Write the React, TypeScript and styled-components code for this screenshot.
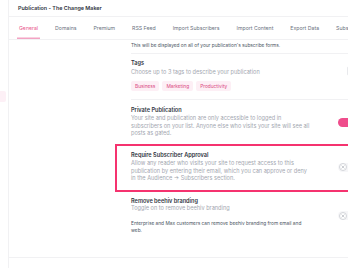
import { createGlobalStyle, styled } from 'styled-components';

const GlobalStyle = createGlobalStyle`
  html, body {
    margin: 0;
    padding: 0;
    background: #ffffff;
  }
  body {
    font-family: Inter, "Noto Sans", sans-serif;
    -webkit-font-smoothing: antialiased;
  }
`;

const Page = styled.div`
  display: flex;
  width: 348px;
  height: 268px;
  overflow: hidden;
  background: #ffffff;
`;

const Sidebar = styled.aside`
  flex: 0 0 9px;
  border-right: 1px solid #f1f1f3;
  padding-top: 91px;
  box-sizing: border-box;
`;

const SidebarItem = styled.div`
  width: 6px;
  height: 11px;
  background: #fdf0f6;
  border-radius: 0 2px 2px 0;
`;

const Main = styled.main`
  flex: 1;
  display: flex;
  flex-direction: column;
  min-width: 0;
  overflow: hidden;
`;

const Header = styled.header`
  height: 17px;
  flex: 0 0 17px;
  box-sizing: border-box;
  display: flex;
  align-items: center;
  padding-left: 9px;
  border-bottom: 1px solid #f1f1f3;
`;

const Title = styled.h1`
  margin: 0;
  font-size: 5.4px;
  font-weight: 600;
  color: #2f3441;
  white-space: nowrap;
`;

const Tabs = styled.nav`
  flex: 0 0 23px;
  height: 23px;
  box-sizing: border-box;
  display: flex;
  align-items: stretch;
  gap: 13px;
  padding-left: 8px;
  border-bottom: 1px solid #f1f1f3;
  white-space: nowrap;
`;

const Tab = styled.div<{ $active?: boolean }>`
  display: flex;
  align-items: center;
  padding: 0 2px;
  font-size: 5.2px;
  color: ${({ $active }) => ($active ? '#e9578c' : '#6b7280')};
  box-shadow: ${({ $active }) => ($active ? 'inset 0 -1.5px 0 #f3a3c3' : 'none')};
`;

const Content = styled.section`
  flex: 1;
  padding-left: 122px;
  width: 230px;
  box-sizing: content-box;
`;

const Helper = styled.p`
  margin: 0;
  height: 14px;
  box-sizing: border-box;
  padding-top: 2px;
  font-size: 4.8px;
  line-height: 6px;
  color: #4b5563;
  white-space: nowrap;
  border-bottom: 1px solid #f1f1f3;
`;

const Row = styled.div<{ $top: number; $bottom: number; $divider?: boolean }>`
  display: flex;
  align-items: center;
  justify-content: space-between;
  padding: ${({ $top, $bottom }) => `${$top}px 5px ${$bottom}px 0`};
  border-bottom: ${({ $divider }) => ($divider ? '1px solid #f1f1f3' : 'none')};
`;

const Highlight = styled.div`
  margin-left: -16px;
  border: 2px solid #f5336f;
  border-right: none;
  padding-left: 14px;
`;

const Text = styled.div`
  width: 182px;
`;

const Label = styled.div`
  font-size: 5.6px;
  line-height: 6px;
  font-weight: 600;
  color: #2f3441;
`;

const Desc = styled.div<{ $gap?: number }>`
  margin-top: ${({ $gap }) => $gap ?? 2.5}px;
  font-size: 5.6px;
  line-height: 7.6px;
  color: #a3a7b0;
`;

const Note = styled.div`
  margin-top: 7px;
  font-size: 4.8px;
  line-height: 7px;
  color: #4b5563;
`;

const TagList = styled.div`
  display: flex;
  gap: 3px;
  margin-top: 4.5px;
`;

const TagPill = styled.span`
  display: inline-flex;
  align-items: center;
  height: 10px;
  padding: 0 4px;
  border-radius: 2px;
  background: #fdeff5;
  color: #d9467f;
  font-size: 4.8px;
`;

const TagInput = styled.div`
  align-self: flex-start;
  margin: 6px -2px 0 0;
  flex: 0 0 11px;
  height: 10px;
  box-sizing: border-box;
  border: 1px solid #e8e9ec;
  border-radius: 2px;
`;

const Toggle = styled.div<{ $on?: boolean }>`
  position: relative;
  flex: 0 0 18px;
  height: 9px;
  border-radius: 5px;
  background: ${({ $on }) => ($on ? '#ef4d8c' : '#f6f6f8')};
`;

const Knob = styled.span<{ $on?: boolean }>`
  position: absolute;
  top: 0.5px;
  left: ${({ $on }) => ($on ? '9.5px' : '0.5px')};
  width: 8px;
  height: 8px;
  box-sizing: border-box;
  border-radius: 50%;
  background: #ffffff;
  border: ${({ $on }) => ($on ? 'none' : '0.7px solid #d3d5da')};
  display: flex;
  align-items: center;
  justify-content: center;
`;

const Footer = styled.footer`
  flex: 0 0 10px;
  border-top: 1px solid #f1f1f3;
`;

const XIcon = () => (
  <svg width="4" height="4" viewBox="0 0 10 10" fill="none">
    <path d="M2 2l6 6M8 2l-6 6" stroke="#a3a7b0" strokeWidth="1.4" strokeLinecap="round" />
  </svg>
);

const tabs = [
  'General',
  'Domains',
  'Premium',
  'RSS Feed',
  'Import Subscribers',
  'Import Content',
  'Export Data',
  'Subscribe Forms',
];

const tags = ['Business', 'Marketing', 'Productivity'];

export default function App() {
  return (
    <>
      <GlobalStyle />
      <Page>
        <Sidebar>
          <SidebarItem />
        </Sidebar>
        <Main>
          <Header>
            <Title>Publication - The Change Maker</Title>
          </Header>
          <Tabs>
            {tabs.map((t, i) => (
              <Tab key={t} $active={i === 0}>
                {t}
              </Tab>
            ))}
          </Tabs>
          <Content>
            <Helper>This will be displayed on all of your publication's subscribe forms.</Helper>
            <Row $top={6} $bottom={8} $divider>
              <Text>
                <Label>Tags</Label>
                <Desc $gap={2.5}>Choose up to 3 tags to describe your publication</Desc>
                <TagList>
                  {tags.map((t) => (
                    <TagPill key={t}>{t}</TagPill>
                  ))}
                </TagList>
              </Text>
              <TagInput />
            </Row>
            <Row $top={7} $bottom={5.7}>
              <Text>
                <Label>Private Publication</Label>
                <Desc>
                  Your site and publication are only accessible to logged in subscribers on your list. Anyone else
                  who visits your site will see all posts as gated.
                </Desc>
              </Text>
              <Toggle $on>
                <Knob $on />
              </Toggle>
            </Row>
            <Highlight>
              <Row $top={6} $bottom={7}>
                <Text>
                  <Label>Require Subscriber Approval</Label>
                  <Desc>
                    Allow any reader who visits your site to request access to this publication by entering their
                    email, which you can approve or deny in the Audience → Subscribers section.
                  </Desc>
                </Text>
                <Toggle>
                  <Knob>
                    <XIcon />
                  </Knob>
                </Toggle>
              </Row>
            </Highlight>
            <Row $top={6} $bottom={0}>
              <Text>
                <Label>Remove beehiv branding</Label>
                <Desc $gap={1.5}>Toggle on to remove beehiv branding</Desc>
                <Note>Enterprise and Max customers can remove beehiv branding from email and web.</Note>
              </Text>
              <Toggle>
                <Knob>
                  <XIcon />
                </Knob>
              </Toggle>
            </Row>
          </Content>
          <Footer />
        </Main>
      </Page>
    </>
  );
}
